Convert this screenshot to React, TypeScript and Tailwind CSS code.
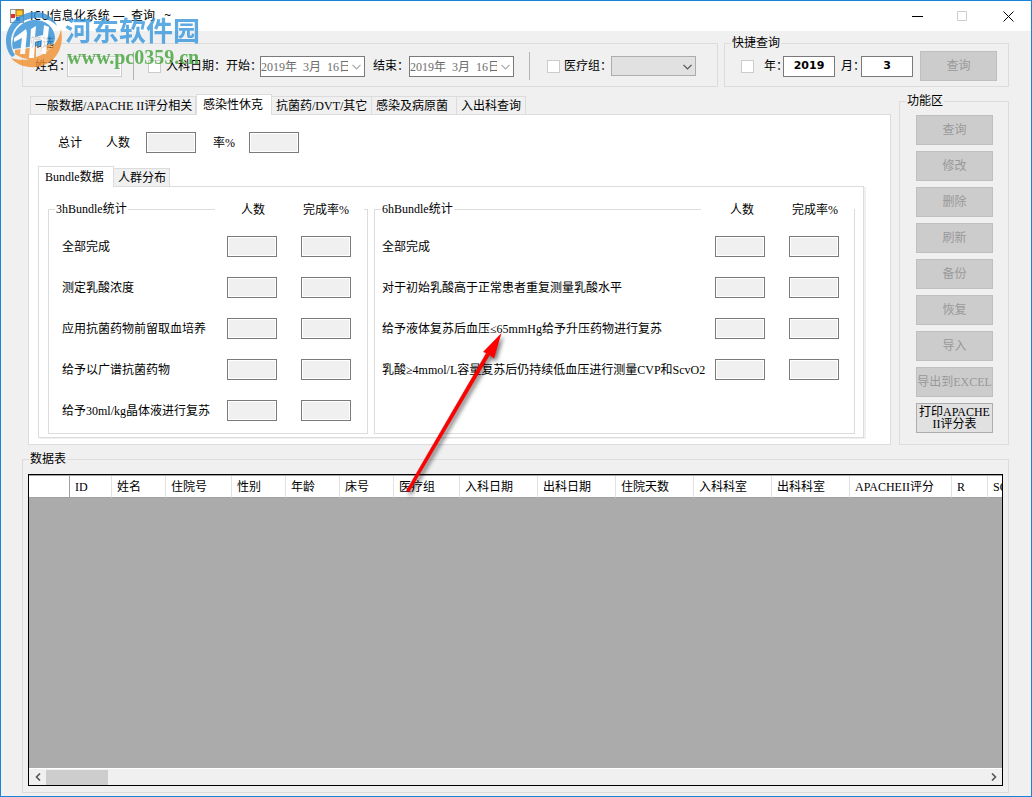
import type { ReactNode } from "react";
import clsx from "clsx";

const ACTIONS = ["查询", "修改", "删除", "刷新", "备份", "恢复", "导入", "导出到EXCEL"];

const TABS = ["一般数据/APACHE II评分相关", "感染性休克", "抗菌药/DVT/其它", "感染及病原菌", "入出科查询"];
const TAB_WIDTHS = ["w-[166px]", "w-[76px]", "w-[101px]", "w-[86px]", "w-[70px]"];

const BUNDLE_3H = [
  "全部完成",
  "测定乳酸浓度",
  "应用抗菌药物前留取血培养",
  "给予以广谱抗菌药物",
  "给予30ml/kg晶体液进行复苏",
];

const BUNDLE_6H = [
  "全部完成",
  "对于初始乳酸高于正常患者重复测量乳酸水平",
  "给予液体复苏后血压≤65mmHg给予升压药物进行复苏",
  "乳酸≥4mmol/L容量复苏后仍持续低血压进行测量CVP和ScvO2",
];

const COLUMNS = [
  { title: "ID", width: "w-[42px]" },
  { title: "姓名", width: "w-[54px]" },
  { title: "住院号", width: "w-[66px]" },
  { title: "性别", width: "w-[54px]" },
  { title: "年龄", width: "w-[54px]" },
  { title: "床号", width: "w-[54px]" },
  { title: "医疗组", width: "w-[66px]" },
  { title: "入科日期", width: "w-[78px]" },
  { title: "出科日期", width: "w-[78px]" },
  { title: "住院天数", width: "w-[78px]" },
  { title: "入科科室", width: "w-[78px]" },
  { title: "出科科室", width: "w-[78px]" },
  { title: "APACHEII评分", width: "w-[102px]" },
  { title: "R", width: "w-[36px]" },
  { title: "SO", width: "w-[54px]" },
];

interface GroupProps {
  title: string;
  className?: string;
  children: ReactNode;
}

function Group({ title, className, children }: GroupProps) {
  return (
    <fieldset className={clsx("relative min-w-0 border border-[#dcdcdc]", className)}>
      <legend className="ml-[6px] h-[14px] px-px leading-[14px]">{title}</legend>
      {children}
    </fieldset>
  );
}

function ValueBox({ label }: { label: string }) {
  return (
    <input
      type="text"
      readOnly
      aria-label={label}
      className="h-[21px] w-[50px] shrink-0 border border-[#7a7a7a] bg-[#f0f0f0] px-1 shadow-[inset_0_0_0_1px_#fff]"
    />
  );
}

function CheckBox({ label }: { label: string }) {
  return (
    <input
      type="checkbox"
      disabled
      aria-label={label}
      className="size-[13px] shrink-0 appearance-none border border-[#cccccc] bg-white"
    />
  );
}

function Chevron({ className }: { className?: string }) {
  return (
    <svg viewBox="0 0 9 6" className={clsx("pointer-events-none absolute h-[6px] w-[9px]", className)}>
      <path d="M0.5 0.8 L4.5 4.8 L8.5 0.8" fill="none" stroke="currentColor" strokeWidth="1.2" />
    </svg>
  );
}

function DateBox({ id }: { id: string }) {
  return (
    <div className="relative h-[21px] w-[105px] shrink-0">
      <input
        id={id}
        type="text"
        disabled
        defaultValue="2019年  3月  16日"
        className="h-full w-full border border-[#7a7a7a] bg-white pr-[16px] text-[#6d6d6d]"
      />
      <Chevron className="top-[8px] right-[4px] text-[#a8a8a8]" />
    </div>
  );
}

function Tab({ title, active, className }: { title: string; active?: boolean; className?: string }) {
  return (
    <button
      type="button"
      role="tab"
      aria-selected={!!active}
      className={clsx(
        "shrink-0 border border-[#dcdcdc] text-left whitespace-nowrap",
        active ? "relative z-10 h-[21px] border-b-0 bg-white pl-[6px]" : "-ml-px h-[19px] bg-[#f0f0f0] pl-[4px]",
        className,
      )}
    >
      {title}
    </button>
  );
}

function BundleGroup({ title, rows, className, coverClass, rowClass }: {
  title: string;
  rows: string[];
  className: string;
  coverClass: string;
  rowClass: string;
}) {
  return (
    <Group title={title} className={className}>
      {/* column captions sit on the frame line */}
      <div className={clsx("absolute -top-[14px] flex h-[16px] justify-end gap-[24px] bg-white leading-[16px]", coverClass)}>
        <span className="w-[50px] pl-[14px]">人数</span>
        <span className="w-[50px] pl-[2px] whitespace-nowrap">完成率%</span>
      </div>
      <div className="flex flex-col gap-[20px] pt-[20px] pb-[12px]">
        {rows.map((row) => (
          <div key={row} className={clsx("flex items-center gap-[24px]", rowClass)}>
            <span className="w-0 flex-1 whitespace-nowrap">{row}</span>
            <ValueBox label={`${row} 人数`} />
            <ValueBox label={`${row} 完成率%`} />
          </div>
        ))}
      </div>
    </Group>
  );
}

function TitleBar() {
  return (
    <header className="flex h-[30px] shrink-0 items-center bg-white pl-[9px]">
      <svg viewBox="0 0 14 14" className="size-[14px]">
        <rect x="0.5" y="0.5" width="13" height="13" fill="#f4f4f4" stroke="#9a9a9a" />
        <rect x="6" y="1" width="7" height="6" fill="#ffc62e" stroke="#9c7313" />
        <rect x="1" y="5" width="4" height="4" fill="#d9362a" />
        <rect x="6" y="8" width="4" height="4" fill="#2f5fc4" />
      </svg>
      <h1 className="ml-[6px] font-['Open_Sans','Noto_Sans_CJK_SC',sans-serif] text-[12px] leading-[16px] whitespace-pre">
        ICU信息化系统 —  查询   ~
      </h1>
      <div className="ml-auto flex h-full">
        <button type="button" aria-label="最小化" className="flex w-[46px] items-center justify-center">
          <svg viewBox="0 0 11 11" className="size-[11px]"><path d="M0 5.5H11" stroke="#000" /></svg>
        </button>
        <button type="button" disabled aria-label="最大化" className="flex w-[45px] items-center justify-center">
          <svg viewBox="0 0 11 11" className="size-[11px]"><path d="M.5 .5H9.5V9.5H.5Z" fill="none" stroke="#ccc" /></svg>
        </button>
        <button type="button" aria-label="关闭" className="flex w-[46px] items-center justify-center">
          <svg viewBox="0 0 11 11" className="size-[11px]"><path d="M.5 .5L10.5 10.5M10.5 .5L.5 10.5" stroke="#000" /></svg>
        </button>
      </div>
    </header>
  );
}

function FilterBar() {
  return (
    <div className="flex gap-[6px]">
      <Group title="筛选" className="flex-1">
        <div className="flex h-[36px] items-center pb-[4px] pl-[12px] whitespace-nowrap">
          <label htmlFor="name" className="w-[32px]">姓名：</label>
          <input id="name" type="text" disabled className="h-[21px] w-[55px] border border-[#cccccc] bg-[#f0f0f0] shadow-[inset_0_0_0_1px_#fff]" />
          <div className="ml-[11px] h-[28px] w-px bg-[#b4b4b4]" />
          <div className="ml-[14px] flex items-center"><CheckBox label="入科日期" /></div>
          <span className="ml-[5px] w-[60px]">入科日期：</span>
          <label htmlFor="from" className="w-[34px]">开始：</label>
          <DateBox id="from" />
          <label htmlFor="to" className="ml-[8px] w-[36px]">结束：</label>
          <DateBox id="to" />
          <div className="ml-[15px] h-[28px] w-px bg-[#b4b4b4]" />
          <div className="ml-[17px] flex items-center"><CheckBox label="医疗组" /></div>
          <label htmlFor="team" className="ml-[4px] w-[47px]">医疗组：</label>
          <div className="relative h-[20px] w-[85px]">
            <select id="team" disabled className="h-full w-full appearance-none border border-[#adadad] bg-[#e1e1e1] opacity-100">
              <option></option>
            </select>
            <Chevron className="top-[8px] right-[4px] text-[#505050]" />
          </div>
        </div>
      </Group>
      <Group title="快捷查询" className="w-[285px]">
        <div className="flex h-[36px] items-center pb-[4px] pl-[16px] whitespace-nowrap">
          <CheckBox label="按年月查询" />
          <label htmlFor="year" className="ml-[10px] w-[19px]">年：</label>
          <input id="year" type="text" defaultValue="2019" className="h-[21px] w-[52px] border border-[#7a7a7a] bg-white pb-[2px] text-center font-['DejaVu_Sans',sans-serif] text-[11px] font-bold" />
          <label htmlFor="month" className="ml-[6px] w-[20px]">月：</label>
          <input id="month" type="text" defaultValue="3" className="h-[21px] w-[52px] border border-[#7a7a7a] bg-white pb-[2px] text-center font-['DejaVu_Sans',sans-serif] text-[11px] font-bold" />
          <button type="button" disabled className="ml-[7px] h-[30px] w-[77px] border border-[#bfbfbf] bg-[#cccccc] text-[#999999]">
            查询
          </button>
        </div>
      </Group>
    </div>
  );
}

function ShockPanel() {
  return (
    <section className="min-w-0 flex-1">
      <div role="tablist" className="flex h-[21px] items-end pl-[3px]">
        {TABS.map((title, i) => (
          <Tab key={title} title={title} active={i === 1} className={TAB_WIDTHS[i]} />
        ))}
      </div>
      <div className="-mt-px border border-[#dcdcdc] bg-white pt-[17px] pr-[26px] pb-[6px] pl-[9px]">
        <div className="flex items-center pl-[20px]">
          <span className="w-[48px]">总计</span>
          <span className="w-[40px]">人数</span>
          <ValueBox label="总计人数" />
          <span className="ml-[17px] w-[36px]">率%</span>
          <ValueBox label="总计率" />
        </div>
        <div role="tablist" className="mt-[13px] flex h-[21px] items-end">
          <Tab title="Bundle数据" active className="w-[76px]" />
          <Tab title="人群分布" className="w-[57px]" />
        </div>
        <div className="-mt-px flex gap-[6px] border border-[#dcdcdc] pt-[15px] pr-[8px] pb-[3px] pl-[9px] shadow-[2px_1px_0_#f0f0f0]">
          <BundleGroup
            title="3hBundle统计"
            rows={BUNDLE_3H}
            className="w-[320px]"
            coverClass="right-[3px] w-[149px] pr-[13px]"
            rowClass="pl-[13px] pr-[16px]"
          />
          <BundleGroup
            title="6hBundle统计"
            rows={BUNDLE_6H}
            className="flex-1"
            coverClass="right-0 w-[153px] pr-[14px]"
            rowClass="pl-[7px] pr-[15px]"
          />
        </div>
      </div>
    </section>
  );
}

function ActionPanel() {
  return (
    <Group title="功能区" className="w-[110px] shrink-0">
      <div className="flex flex-col gap-[6px] pt-[7px] pr-[15px] pb-[11px] pl-[16px]">
        {ACTIONS.map((action) => (
          <button key={action} type="button" disabled className="h-[30px] border border-[#bfbfbf] bg-[#cccccc] whitespace-nowrap text-[#999999]">
            {action}
          </button>
        ))}
        <button type="button" className="h-[30px] border border-[#adadad] bg-[#e1e1e1] leading-[12px] whitespace-nowrap">
          打印APACHE
          <br />
          II评分表
        </button>
      </div>
    </Group>
  );
}

function DataGrid() {
  return (
    <section className="mt-[14px] flex flex-1 flex-col border border-[#dcdcdc]">
      <h2 className="-mt-[8px] ml-[6px] h-[14px] self-start bg-[#f0f0f0] px-px leading-[14px]">数据表</h2>
      <div className="mx-[5px] mt-[8px] mb-[6px] flex flex-1 flex-col overflow-hidden border border-black bg-[#ababab]">
        <div className="w-0 min-w-full flex-1 overflow-hidden">
          <table className="w-max table-fixed border-separate border-spacing-0 border-t border-[#a0a0a0] bg-white">
            <thead>
              <tr className="h-[22px]">
                <th className="w-[41px] border-r border-b border-[#a0a0a0]" />
                {COLUMNS.map(({ title, width }) => (
                  <th
                    key={title}
                    scope="col"
                    className={clsx("border-r border-b border-r-[#e2e2e2] border-b-[#a0a0a0] pl-[5px] text-left font-normal whitespace-nowrap", width)}
                  >
                    {title}
                  </th>
                ))}
              </tr>
            </thead>
          </table>
        </div>
        <div className="flex h-[17px] shrink-0 items-center border-t border-white bg-[#f0f0f0]">
          <button type="button" aria-label="向左滚动" className="flex h-full w-[17px] items-center justify-center">
            <svg viewBox="0 0 6 8" className="h-[8px] w-[6px]"><path d="M5 .5L1.5 4L5 7.5" fill="none" stroke="#555" strokeWidth="1.6" /></svg>
          </button>
          <div className="h-[15px] w-[62px] bg-[#cdcdcd]" />
          <button type="button" aria-label="向右滚动" className="ml-auto flex h-full w-[17px] items-center justify-center">
            <svg viewBox="0 0 6 8" className="h-[8px] w-[6px]"><path d="M1 .5L4.5 4L1 7.5" fill="none" stroke="#555" strokeWidth="1.6" /></svg>
          </button>
        </div>
      </div>
    </section>
  );
}

function Watermark() {
  return (
    <div className="pointer-events-none absolute top-[8px] left-[4px] z-20 flex opacity-80">
      <svg viewBox="0 0 58 60" className="h-[60px] w-[58px]">
        <path d="M1 32C1 17 12 5 27 3C40 2 49 8 52 17C46 11 38 8 30 9C16 10 7 20 6 31C6 37 7 42 10 46L7 48C3 44 1 38 1 32Z" fill="#3391d6" />
        <path d="M8 30C9 19 19 11 30 11C41 11 49 18 50 28C50 31 49 33 48 35L8 40C7 37 7 33 8 30Z" fill="#3391d6" />
        <path d="M56 20C60 39 50 56 31 58C21 59 12 56 6 49C18 53 31 50 41 43C49 37 54 30 56 20Z" fill="#f2902f" />
        <path d="M10 41L31 38V49C24 52 16 49 10 45ZM36 37L47 35C46 39 42 42 36 45Z" fill="#f2902f" />
        <path d="M9 29L21 20L22 24L20 45H15L17 29L9 33ZM26 20L31 17L30 28L38 26L39 16L44 18L41 45H36L37 31L30 33L29 49H24Z" fill="#fff" />
      </svg>
      <div className="pt-[5px] pl-[2px]">
        <div className="font-['Noto_Sans_CJK_SC',sans-serif] text-[27px] leading-[32px] font-bold whitespace-nowrap text-[#3597dc]">
          河东软件园
        </div>
        <div className="pl-[2px] font-['Liberation_Serif',serif] text-[20px] leading-[22px] font-bold text-[#41a336]">
          www.pc0359.cn
        </div>
      </div>
    </div>
  );
}

function Arrow() {
  return (
    <svg viewBox="0 0 110 170" className="pointer-events-none absolute top-[328px] left-[400px] z-20 h-[170px] w-[110px] drop-shadow-[2px_3px_2px_rgba(0,0,0,0.55)]">
      <path d="M5.5 161.5L85.500 24L88.500 26L8 163Z" fill="#f00" stroke="#e60000" strokeWidth="0.6" />
      <path d="M100.500 4L82 23L86.500 24.500L88.500 26L93 29.500Z" fill="#f00" />
    </svg>
  );
}

export default function App() {
  return (
    <div className="relative flex min-h-screen flex-col border border-[#1883d7] bg-[#f0f0f0] font-['Liberation_Serif','Noto_Sans_CJK_SC',serif] text-[12px] leading-[16px] text-black">
      <TitleBar />
      <main className="flex flex-1 flex-col pt-[5px] pr-[22px] pb-[3px] pl-[21px]">
        <FilterBar />
        <div className="mt-[7px] flex gap-[8px] pl-[6px]">
          <ShockPanel />
          <ActionPanel />
        </div>
        <DataGrid />
      </main>
      <Watermark />
      <Arrow />
    </div>
  );
}
